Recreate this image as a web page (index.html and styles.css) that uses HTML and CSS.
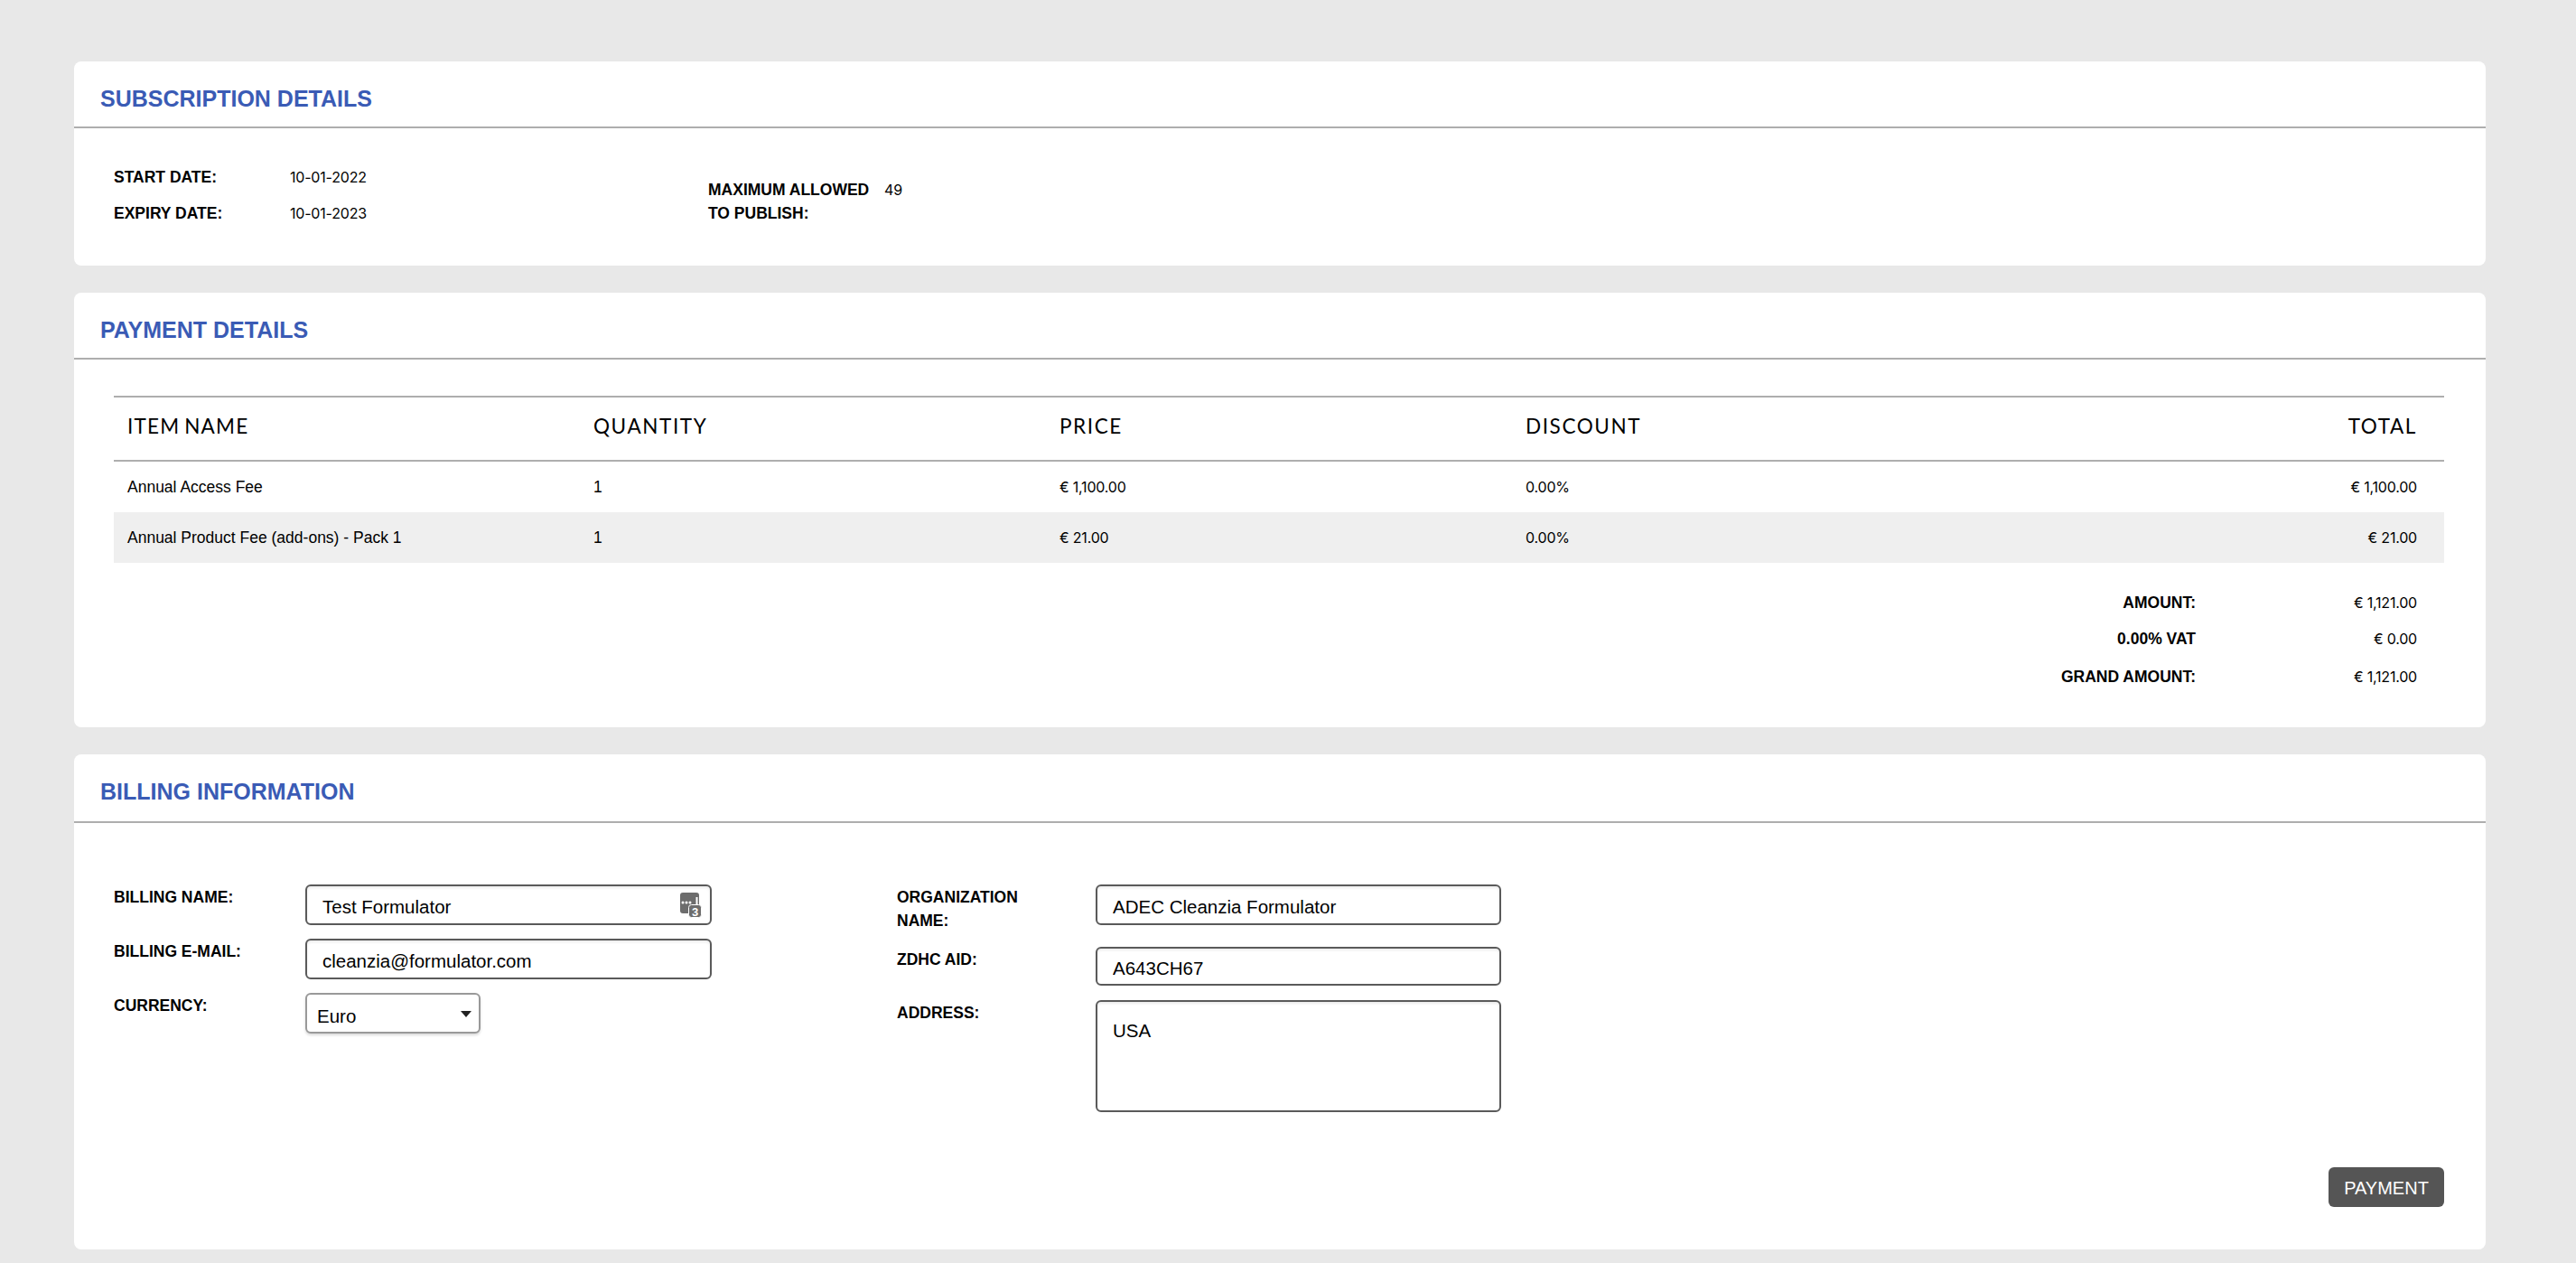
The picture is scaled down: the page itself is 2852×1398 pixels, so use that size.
FILE: index.html
```html
<!DOCTYPE html>
<html lang="en">
<head>
    <meta charset="UTF-8">
    <title>Subscription</title>
    <link rel="stylesheet" href="styles.css">
</head>
<body>
    <!-- Subscription details -->
    <section class="card">
        <h2 class="card-title">SUBSCRIPTION DETAILS</h2>
        <div class="card-body sub-body">
            <div class="sub-dates">
                <span class="label">START DATE:</span><span class="value">10-01-2022</span>
                <span class="label">EXPIRY DATE:</span><span class="value">10-01-2023</span>
            </div>
            <div class="sub-limit">
                <span class="label">MAXIMUM ALLOWED TO PUBLISH:</span><span class="value">49</span>
            </div>
        </div>
    </section>

    <!-- Payment details -->
    <section class="card">
        <h2 class="card-title">PAYMENT DETAILS</h2>
        <div class="card-body pay-body">
            <table class="pay-table">
                <thead>
                    <tr>
                        <th class="item-head">ITEM NAME</th>
                        <th>QUANTITY</th>
                        <th>PRICE</th>
                        <th>DISCOUNT</th>
                        <th class="right">TOTAL</th>
                    </tr>
                </thead>
                <tbody>
                    <tr>
                        <td>Annual Access Fee</td>
                        <td>1</td>
                        <td class="value">€ 1,100.00</td>
                        <td class="value">0.00%</td>
                        <td class="value right">€ 1,100.00</td>
                    </tr>
                    <tr class="alt">
                        <td>Annual Product Fee (add-ons) - Pack 1</td>
                        <td>1</td>
                        <td class="value">€ 21.00</td>
                        <td class="value">0.00%</td>
                        <td class="value right">€ 21.00</td>
                    </tr>
                </tbody>
            </table>
            <div class="totals">
                <span class="label">AMOUNT:</span><span class="value">€ 1,121.00</span>
                <span class="label">0.00% VAT</span><span class="value">€ 0.00</span>
                <span class="label grand">GRAND AMOUNT:</span><span class="value grand">€ 1,121.00</span>
            </div>
        </div>
    </section>

    <!-- Billing information -->
    <section class="card billing-card">
        <h2 class="card-title">BILLING INFORMATION</h2>
        <div class="card-body billing-body">
            <div class="billing-form">
                <div class="billing-col billing-left">
                    <label class="label">BILLING NAME:</label>
                    <div class="input-wrap">
                        <input class="field" type="text" value="Test Formulator">
                        <svg class="input-icon" viewBox="0 0 24 28" width="24" height="28">
                            <rect x="0" y="0" width="21" height="23" rx="3" fill="#6d6d6d"/>
                            <circle cx="3" cy="11" r="1.5" fill="#fff"/>
                            <circle cx="7" cy="11" r="1.5" fill="#fff"/>
                            <circle cx="11" cy="11" r="1.5" fill="#fff"/>
                            <rect x="17.5" y="5" width="2" height="8" fill="#fff"/>
                            <rect x="9.5" y="13.5" width="14" height="14" rx="3" fill="#6d6d6d" stroke="#fff" stroke-width="1"/>
                            <text x="16.5" y="25.5" text-anchor="middle" class="icon-num">3</text>
                        </svg>
                    </div>
                    <label class="label">BILLING E-MAIL:</label>
                    <input class="field" type="text" value="cleanzia@formulator.com">
                    <label class="label">CURRENCY:</label>
                    <div class="select-wrap">
                        <select class="field select">
                            <option>Euro</option>
                        </select>
                    </div>
                </div>
                <div class="billing-col billing-right">
                    <label class="label org-label">ORGANIZATION NAME:</label>
                    <input class="field" type="text" value="ADEC Cleanzia Formulator">
                    <label class="label">ZDHC AID:</label>
                    <input class="field field-short" type="text" value="A643CH67">
                    <label class="label">ADDRESS:</label>
                    <textarea class="field area">USA</textarea>
                </div>
            </div>
            <div class="actions">
                <button class="pay-btn">PAYMENT</button>
            </div>
        </div>
    </section>
</body>
</html>
```

FILE: styles.css
```css
* {
    box-sizing: border-box;
}

body {
    margin: 0;
    padding: 68px 100px 18px 82px;
    background: #e8e8e8;
    color: #000;
    font-family: "Liberation Sans", Arial, sans-serif;
}

.card {
    background: #fff;
    border-radius: 8px;
    margin-bottom: 30px;
}

.card:last-child {
    margin-bottom: 0;
}

.card-title {
    margin: 0;
    height: 74px;
    padding: 27px 0 0 29px;
    border-bottom: 2px solid #aeaeae;
    color: #3a5bb5;
    font-size: 25px;
    line-height: 28px;
    font-weight: 700;
}

.billing-card .card-title {
    height: 76px;
    padding-top: 27px;
}

.label {
    font-size: 17.5px;
    font-weight: 700;
    line-height: 26px;
}

.value {
    font-family: Inter, "Liberation Sans", sans-serif;
    font-size: 16px;
    letter-spacing: -0.2px;
}

/* Subscription */
.sub-body {
    display: flex;
    padding: 34px 44px 38px;
}

.sub-dates {
    display: grid;
    grid-template-columns: 195px 463px;
    grid-auto-rows: 40px;
    align-items: center;
}

.sub-limit {
    display: grid;
    grid-template-columns: 195px auto;
    align-items: start;
    margin-top: 21px;
}

.sub-limit .value {
    line-height: 26px;
}

/* Payment table */
.pay-body {
    padding: 40px 46px 38px 44px;
}

.pay-table {
    width: 100%;
    table-layout: fixed;
    border-collapse: collapse;
    border-top: 2px solid #aeaeae;
}

.pay-table th {
    height: 71px;
    padding: 0 30px 6px 15px;
    border-bottom: 2px solid #aeaeae;
    font-family: Lato, sans-serif;
    font-size: 22.5px;
    font-weight: 400;
    letter-spacing: 1.6px;
    text-align: left;
}

.pay-table .item-head {
    letter-spacing: 1.2px;
    word-spacing: -2px;
}

.pay-table td {
    height: 56px;
    padding: 0 30px 0 15px;
    font-size: 17.5px;
}

.pay-table tbody tr:first-child td {
    height: 57px;
}

.pay-table .right {
    text-align: right;
}

.pay-table .alt td {
    background: #efefef;
}

.pay-table td.value {
    font-size: 16px;
}

.totals {
    display: grid;
    grid-template-columns: 1fr 245px;
    grid-auto-rows: 40px;
    align-items: center;
    margin-top: 24px;
    padding-right: 30px;
    text-align: right;
}

.totals .grand {
    padding-top: 4px;
}

/* Billing form */
.billing-body {
    padding: 68px 46px 47px 44px;
}

.billing-form {
    display: flex;
    height: 252px;
}

.billing-col {
    display: grid;
    align-content: start;
    align-items: start;
    row-gap: 15px;
}

.billing-left {
    grid-template-columns: 212px 450px;
    margin-right: 205px;
}

.billing-right {
    grid-template-columns: 220px 449px;
    row-gap: 16px;
}

.billing-col .label {
    padding-top: 1px;
}

.org-label {
    max-width: 160px;
}

.field {
    display: block;
    width: 100%;
    height: 45px;
    padding: 5px 17px 0;
    border: 2px solid #5a5a5a;
    border-radius: 6px;
    background: #fff;
    box-shadow: inset 0 2px 3px rgba(0, 0, 0, 0.08);
    color: #000;
    font-family: "Liberation Sans", Arial, sans-serif;
    font-size: 20.5px;
    outline: none;
}

.field-short {
    height: 43px;
}

.area {
    height: 124px;
    padding-top: 20px;
    resize: none;
}

.input-wrap {
    position: relative;
}

.input-icon {
    position: absolute;
    top: 9px;
    right: 11px;
}

.icon-num {
    fill: #fff;
    font-family: "Liberation Sans", sans-serif;
    font-size: 13px;
    font-weight: 700;
}

.select-wrap {
    position: relative;
    width: 194px;
}

.select-wrap::after {
    content: "";
    position: absolute;
    top: 20px;
    right: 10px;
    border-left: 6px solid transparent;
    border-right: 6px solid transparent;
    border-top: 7px solid #222;
}

.select {
    padding-left: 11px;
    border-color: #999;
    box-shadow: 0 2px 3px rgba(0, 0, 0, 0.15);
    appearance: none;
}

.actions {
    display: flex;
    justify-content: flex-end;
    margin-top: 61px;
}

.pay-btn {
    width: 128px;
    height: 44px;
    padding: 3px 0 0;
    border: none;
    border-radius: 6px;
    background: #555;
    color: #fff;
    font-family: "Liberation Sans", Arial, sans-serif;
    font-size: 20px;
}
```
